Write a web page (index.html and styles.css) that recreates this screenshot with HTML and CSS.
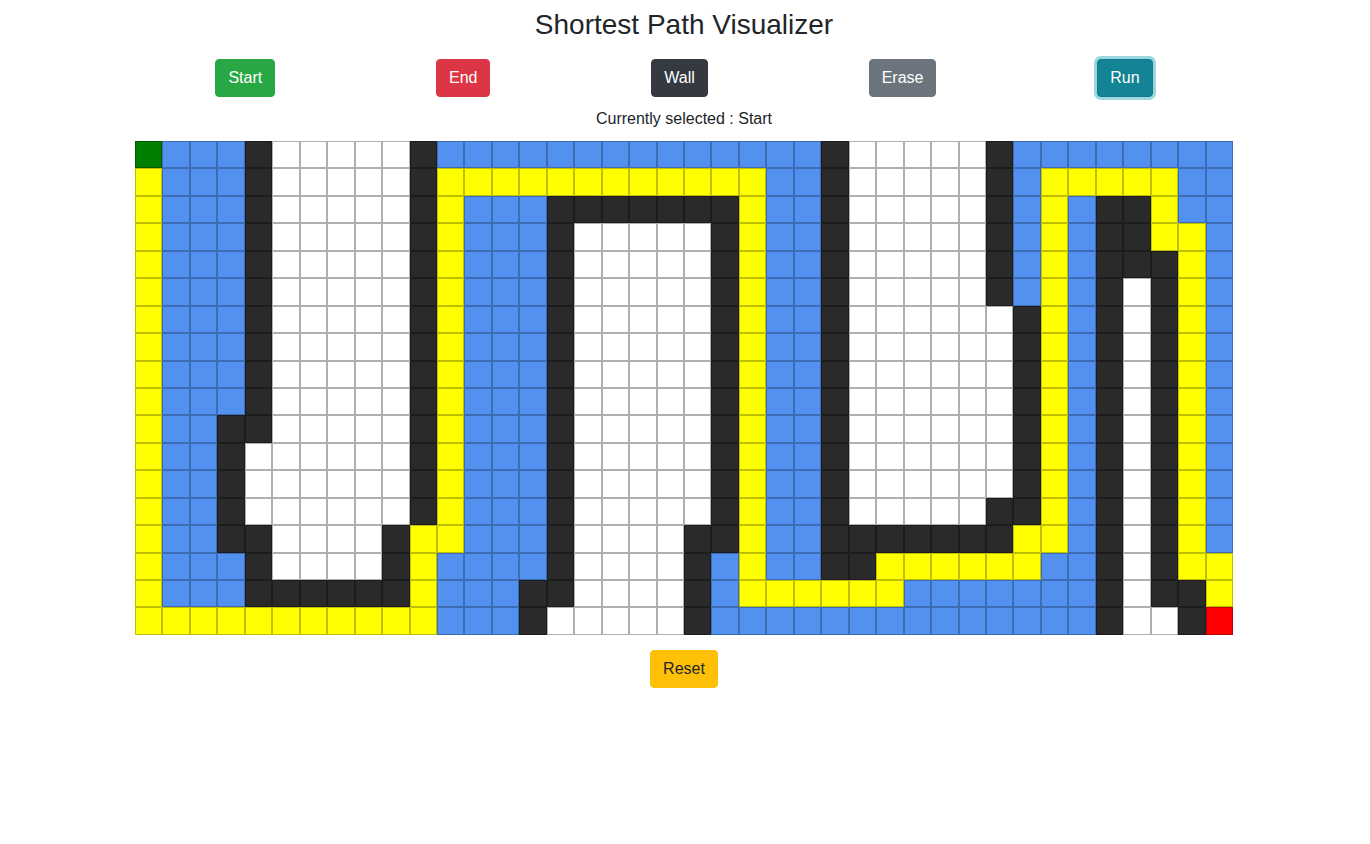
FILE: index.html
```html
<!DOCTYPE html>
<html lang="en">
<head>
<meta charset="utf-8">
<title>Shortest Path Visualizer</title>
<link rel="stylesheet" href="styles.css">
</head>
<body>
<main class="page">
  <h1 class="title">Shortest Path Visualizer</h1>
  <div class="toolbar">
    <button class="btn btn-start">Start</button>
    <button class="btn btn-end">End</button>
    <button class="btn btn-wall">Wall</button>
    <button class="btn btn-erase">Erase</button>
    <button class="btn btn-run is-focused">Run</button>
  </div>
  <p class="status">Currently selected : Start</p>
  <div class="board" id="board"></div>
  <div class="footer">
    <button class="btn btn-reset">Reset</button>
  </div>
</main>
<script src="script.js"></script>
</body>
</html>
```

FILE: styles.css
```css
* { box-sizing: border-box; }

body {
  margin: 0;
  background: #fff;
  color: #212529;
  font-family: "Liberation Sans", Arial, sans-serif;
  font-size: 16px;
  line-height: 1.5;
}

.page {
  display: flex;
  flex-direction: column;
  align-items: center;
  padding-right: 2px;
}

.title {
  margin: 0;
  padding-top: 8px;
  font-size: 28px;
  line-height: 34px;
  font-weight: 400;
  color: #212529;
}

.toolbar {
  width: 1098px;
  margin-top: 17px;
  display: flex;
  justify-content: space-around;
}

.btn {
  font-family: "Liberation Sans", Arial, sans-serif;
  font-size: 16px;
  line-height: 24px;
  padding: 6px 12px;
  border: 1px solid transparent;
  border-radius: 4px;
  color: #fff;
  cursor: pointer;
}

.btn-start { background: #28a745; border-color: #28a745; }
.btn-end { background: #dc3545; border-color: #dc3545; }
.btn-wall { background: #343a40; border-color: #343a40; }
.btn-erase { background: #6c757d; border-color: #6c757d; }
.btn-run { background: #17a2b8; border-color: #17a2b8; }
.btn-run.is-focused {
  background: #138496;
  border-color: #117a8b;
  box-shadow: 0 0 0 3px rgba(58, 176, 195, 0.5);
}
.btn-reset { background: #ffc107; border-color: #ffc107; color: #212529; }

.status {
  margin: 10px 0 10px;
  line-height: 24px;
}

.board {
  width: 1098px;
  display: grid;
  grid-template-columns: repeat(40, 1fr);
  grid-auto-rows: 27.44px;
}

.cell {
  background: #fff;
  border: 1px solid #afafaf;
}
.cell.wall { background: #2a2a2a; border-color: #1c1c1c; }
.cell.visited { background: #5291f0; border-color: #3c6cb4; }
.cell.path { background: #ffff00; border-color: #bfbf00; }
.cell.start { background: #008000; border-color: #005a00; }
.cell.end { background: #ff0000; border-color: #c00000; }

.footer {
  margin-top: 15px;
}
```

FILE: script.js
```js
(function () {
  var rows = [
    "GBBBW.....WBBBBBBBBBBBBBBW.....WBBBBBBBB",
    "YBBBW.....WYYYYYYYYYYYYBBW.....WBYYYYYBB",
    "YBBBW.....WYBBBWWWWWWWYBBW.....WBYBWWYBB",
    "YBBBW.....WYBBBW.....WYBBW.....WBYBWWYYB",
    "YBBBW.....WYBBBW.....WYBBW.....WBYBWWWYB",
    "YBBBW.....WYBBBW.....WYBBW.....WBYBW.WYB",
    "YBBBW.....WYBBBW.....WYBBW......WYBW.WYB",
    "YBBBW.....WYBBBW.....WYBBW......WYBW.WYB",
    "YBBBW.....WYBBBW.....WYBBW......WYBW.WYB",
    "YBBBW.....WYBBBW.....WYBBW......WYBW.WYB",
    "YBBWW.....WYBBBW.....WYBBW......WYBW.WYB",
    "YBBW......WYBBBW.....WYBBW......WYBW.WYB",
    "YBBW......WYBBBW.....WYBBW......WYBW.WYB",
    "YBBW......WYBBBW.....WYBBW.....WWYBW.WYB",
    "YBBWW....WYYBBBW....WWYBBWWWWWWWYYBW.WYB",
    "YBBBW....WYBBBBW....WBYBBWWYYYYYYBBW.WYY",
    "YBBBWWWWWWYBBBWW....WBYYYYYYBBBBBBBW.WWY",
    "YYYYYYYYYYYBBBW.....WBBBBBBBBBBBBBBW..WR"
  ];
  var map = { ".": "", "W": "wall", "B": "visited", "Y": "path", "G": "start", "R": "end" };
  var board = document.getElementById("board");
  var frag = document.createDocumentFragment();
  rows.forEach(function (row) {
    for (var i = 0; i < 40; i++) {
      var d = document.createElement("div");
      var k = map[row.charAt(i)] || "";
      d.className = "cell" + (k ? " " + k : "");
      frag.appendChild(d);
    }
  });
  board.appendChild(frag);
})();
```
